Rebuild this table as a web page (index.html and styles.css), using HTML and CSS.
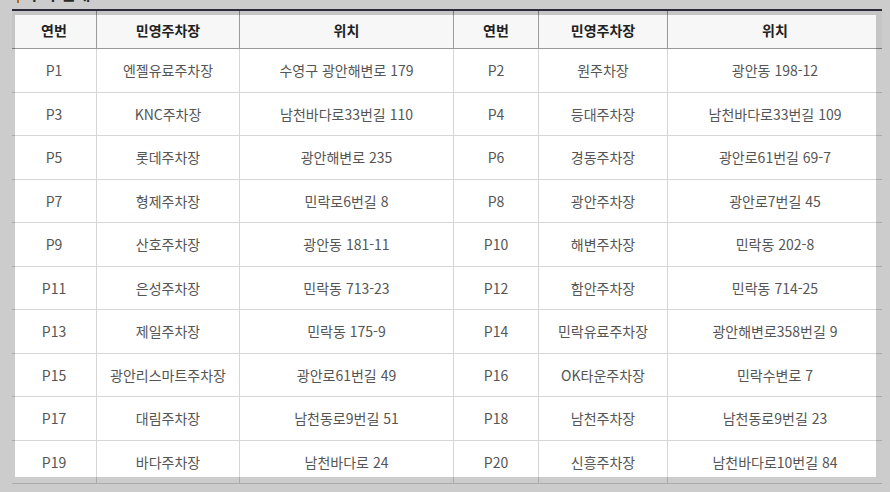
FILE: index.html
```html
<!DOCTYPE html>
<html lang="ko">
<head>
<meta charset="utf-8">
<link rel="stylesheet" href="styles.css">
</head>
<body>
<div class="page">
  <h3 class="title">주차 안내</h3>
  <table class="park">
    <colgroup>
      <col class="c-no"><col class="c-name"><col class="c-loc">
      <col class="c-no2"><col class="c-name2"><col class="c-loc2">
    </colgroup>
    <thead>
      <tr><th>연번</th><th>민영주차장</th><th>위치</th><th>연번</th><th>민영주차장</th><th>위치</th></tr>
    </thead>
    <tbody>
      <tr><td>P1</td><td>엔젤유료주차장</td><td>수영구 광안해변로 179</td><td>P2</td><td>원주차장</td><td>광안동 198-12</td></tr>
      <tr><td>P3</td><td>KNC주차장</td><td>남천바다로33번길 110</td><td>P4</td><td>등대주차장</td><td>남천바다로33번길 109</td></tr>
      <tr><td>P5</td><td>롯데주차장</td><td>광안해변로 235</td><td>P6</td><td>경동주차장</td><td>광안로61번길 69-7</td></tr>
      <tr><td>P7</td><td>형제주차장</td><td>민락로6번길 8</td><td>P8</td><td>광안주차장</td><td>광안로7번길 45</td></tr>
      <tr><td>P9</td><td>산호주차장</td><td>광안동 181-11</td><td>P10</td><td>해변주차장</td><td>민락동 202-8</td></tr>
      <tr><td>P11</td><td>은성주차장</td><td>민락동 713-23</td><td>P12</td><td>함안주차장</td><td>민락동 714-25</td></tr>
      <tr><td>P13</td><td>제일주차장</td><td>민락동 175-9</td><td>P14</td><td>민락유료주차장</td><td>광안해변로358번길 9</td></tr>
      <tr><td>P15</td><td>광안리스마트주차장</td><td>광안로61번길 49</td><td>P16</td><td>OK타운주차장</td><td>민락수변로 7</td></tr>
      <tr><td>P17</td><td>대림주차장</td><td>남천동로9번길 51</td><td>P18</td><td>남천주차장</td><td>남천동로9번길 23</td></tr>
      <tr><td>P19</td><td>바다주차장</td><td>남천바다로 24</td><td>P20</td><td>신흥주차장</td><td>남천바다로10번길 84</td></tr>
    </tbody>
  </table>
</div>
<div class="focus"></div>
</body>
</html>
```
FILE: styles.css
```css
html, body {
  margin: 0;
  padding: 0;
  background: #ffffff;
  overflow: hidden;
  height: 100%;
}
body {
  font-family: "Noto Sans CJK KR", "Noto Sans", sans-serif;
  position: relative;
}
.page {
  padding: 0 8px 0 12px;
}
.title {
  margin: -17px 0 0 5px;
  padding-left: 8px;
  border-left: 2px solid #e0862a;
  font-size: 16px;
  line-height: 20px;
  height: 20px;
  font-weight: 700;
  color: #333;
  box-sizing: border-box;
}
.title + .park {
  margin-top: 6px;
}
.park {
  width: 870px;
  border-collapse: collapse;
  table-layout: fixed;
  border-top: 2px solid #353548;
}
.c-no { width: 84.5px; }
.c-name { width: 143px; }
.c-loc { width: 214px; }
.c-no2 { width: 85px; }
.c-name2 { width: 129px; }
.c-loc2 { width: 214.5px; }
.park th {
  height: 37px;
  padding: 0;
  background: #f7f7f7;
  color: #222;
  font-size: 14px;
  font-weight: 700;
  text-align: center;
  border-bottom: 1px solid #999;
  border-left: 1px solid #9a9a9a;
}
.park td {
  height: 42.5px;
  padding: 0;
  color: #555;
  font-size: 14px;
  text-align: center;
  border-bottom: 1px solid #d6d6d6;
  border-left: 1px solid #d6d6d6;
  white-space: nowrap;
}
.park th:first-child, .park td:first-child {
  border-left: none;
}
.focus {
  position: absolute;
  left: 15px;
  top: 15px;
  width: 861px;
  height: 462px;
  box-shadow: 0 0 0 3000px rgba(0, 0, 0, 0.2);
  pointer-events: none;
}
```
